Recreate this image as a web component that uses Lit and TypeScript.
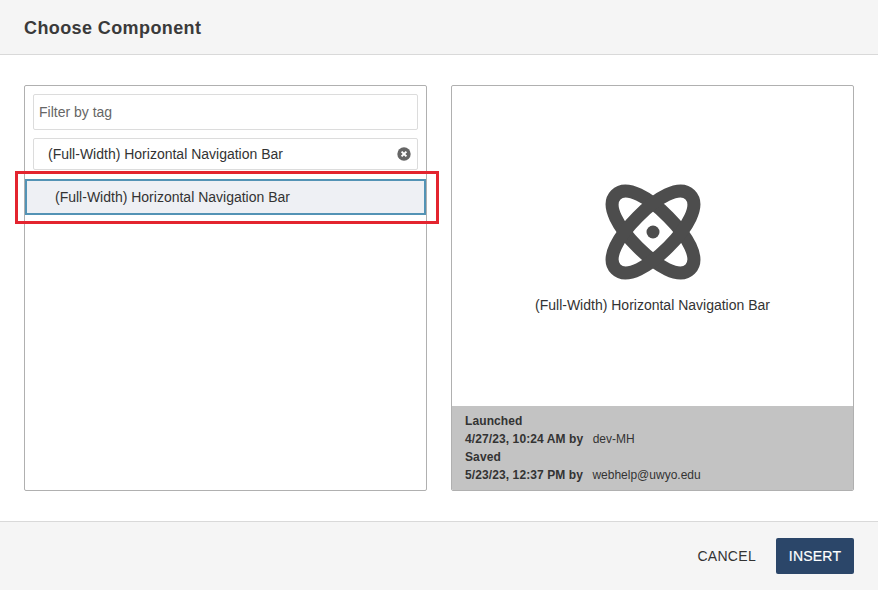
import { LitElement, html, css } from "lit";
import { customElement } from "lit/decorators.js";

const ORBIT = "M-52.5 0C-52.5 -15 -27 -21.5 0 -21.5S52.5 -15 52.5 0S27 21.5 0 21.5S-52.5 15 -52.5 0Z";

@customElement("app-root")
export class AppRoot extends LitElement {
  static styles = css`
    :host { display: flex; flex-direction: column; width: 878px; height: 590px; position: relative; background: #fff; overflow: hidden;
      font-family: "Liberation Sans", Arial, sans-serif; color: #333; font-size: 14px; }
    .head { height: 55px; box-sizing: border-box; background: #f5f5f5; border-bottom: 1px solid #d9d9d9; display: flex; align-items: center; padding: 2px 0 0 24px; }
    .head h1 { margin: 0; font-size: 18px; font-weight: 700; letter-spacing: 0.4px; color: #3a3a3a; }
    .body { flex: 1; display: flex; gap: 24px; padding: 30px 24px; box-sizing: border-box; }
    .panel { flex: 1; border: 1px solid #b0b0b0; border-radius: 2px; display: flex; flex-direction: column; min-width: 0; }
    .left { padding-top: 8px; gap: 8px; }
    .filter, .tag { margin: 0 8px; border: 1px solid #dcdcdc; border-radius: 2px; display: flex; align-items: center; box-sizing: border-box; }
    .filter { height: 36px; padding-left: 5px; color: #666; }
    .tag { height: 32px; padding: 0 6px 0 14px; justify-content: space-between; margin-bottom: 1px; }
    .tag svg { display: block; }
    .item { height: 36px; box-sizing: border-box; border: 2px solid #5393b5; background: #eef0f4; display: flex; align-items: center; padding-left: 28px; }
    .right { overflow: hidden; }
    .preview { flex: 1; display: flex; flex-direction: column; align-items: center; padding-top: 98px; box-sizing: border-box; }
    .preview span { margin-top: 17px; }
    .meta { height: 84px; box-sizing: border-box; background: #c3c3c3; padding: 6px 13px; font-size: 12px; line-height: 18px; color: #333; }
    .meta b { font-weight: 700; letter-spacing: 0.1px; }
    .meta i { font-style: normal; margin-left: 6px; }
    .foot { height: 69px; box-sizing: border-box; background: #f5f5f5; border-top: 1px solid #d9d9d9; display: flex; align-items: center; justify-content: flex-end; padding: 0 24px 1px; gap: 20px; }
    .cancel { font-size: 14px; letter-spacing: 0.3px; color: #333; }
    .insert { width: 78px; height: 36px; background: #2b4669; color: #fff; border-radius: 2px; display: flex; align-items: center; justify-content: center; font-size: 14px; letter-spacing: 0.2px; -webkit-text-stroke: 0.2px #fff; }
    .mark { position: absolute; left: 15px; top: 171px; width: 424px; height: 53px; box-sizing: border-box; border: 3px solid #e3242f; pointer-events: none; }
  `;

  render() {
    return html`
      <div class="head"><h1>Choose Component</h1></div>
      <div class="body">
        <div class="panel left">
          <div class="filter">Filter by tag</div>
          <div class="tag">
            <span>(Full-Width) Horizontal Navigation Bar</span>
            <svg width="14" height="14" viewBox="0 0 14 14">
              <circle cx="7" cy="7" r="6.7" fill="#666"></circle>
              <path d="M4.6 4.6l4.8 4.8M9.4 4.6l-4.8 4.8" stroke="#fff" stroke-width="2" fill="none"></path>
            </svg>
          </div>
          <div class="item">(Full-Width) Horizontal Navigation Bar</div>
        </div>
        <div class="panel right">
          <div class="preview">
            <svg width="96" height="96" viewBox="-48 -48 96 96">
              <g fill="none" stroke="#4d4d4d" stroke-width="13">
                <path d=${ORBIT} transform="rotate(45)"></path>
                <path d=${ORBIT} transform="rotate(-45)"></path>
              </g>
              <circle r="6.5" fill="#4d4d4d"></circle>
            </svg>
            <span>(Full-Width) Horizontal Navigation Bar</span>
          </div>
          <div class="meta">
            <div><b>Launched</b></div>
            <div><b>4/27/23, 10:24 AM by</b> <i>dev-MH</i></div>
            <div><b>Saved</b></div>
            <div><b>5/23/23, 12:37 PM by</b> <i>webhelp@uwyo.edu</i></div>
          </div>
        </div>
      </div>
      <div class="foot">
        <span class="cancel">CANCEL</span>
        <div class="insert">INSERT</div>
      </div>
      <div class="mark"></div>
    `;
  }
}
